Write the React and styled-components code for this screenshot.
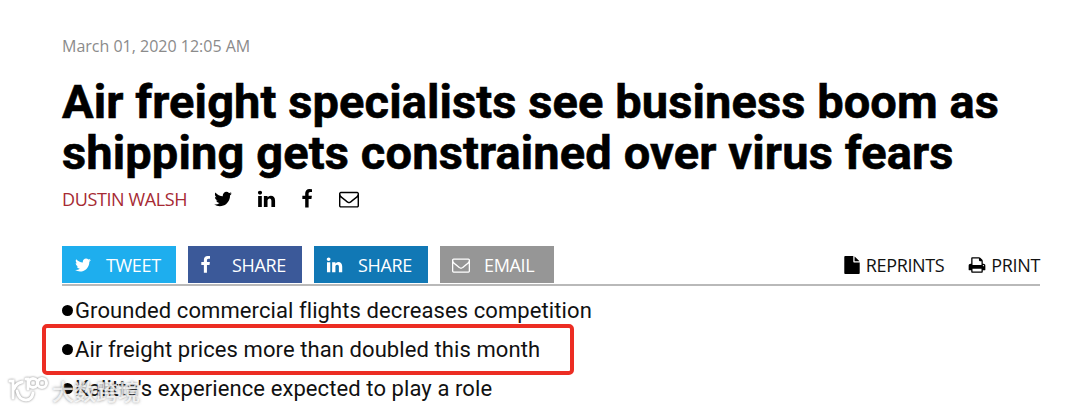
import React from 'react'
import styled, { createGlobalStyle } from 'styled-components'

const icons = {
  twitter: 'M1684 408q-67 98-162 167 1 14 1 42 0 130-38 259.5t-115.500 248.500-184.500 210.500-258 146-323 54.500q-271 0-496-145 35 4 78 4 225 0 401-138-105-2-188-64.500t-114-159.500q33 5 61 5 43 0 85-11-112-23-185.500-111.500t-73.500-205.500v-4q68 38 146 41-66-44-105-115t-39-154q0-88 44-163 121 149 294.500 238.500t371.500 99.500q-8-38-8-74 0-134 94.500-228.500t228.500-94.500q140 0 236 102 109-21 205-78-37 115-142 178 93-10 186-50z',
  linkedin: 'M477 625v991h-330v-991h330zm21-306q1 73-50.500 122t-135.500 49h-2q-82 0-132-49t-50-122q0-74 51.500-122.500t134.500-48.500 133 48.500 51 122.500zm1166 729v568h-329v-530q0-105-40.500-164.500t-126.500-59.500q-63 0-105.500 34.500t-63.500 85.500q-11 30-11 81v553h-329q2-399 2-647t-1-296l-1-48h329v144h-2q20-32 41-56t56.500-52 87-43.500 114.500-15.500q171 0 275 113.500t104 332.500z',
  facebook: 'M1343 12v264h-157q-86 0-116 36t-30 108v189h293l-39 296h-254v759h-306v-759h-255v-296h255v-218q0-186 104-288.500t277-102.500q147 0 228 12z',
  envelope: 'M1664 1504v-768q-32 36-69 66-268 206-426 338-51 43-83 67t-86.500 48.500-102.500 24.500h-2q-48 0-102.500-24.500t-86.500-48.500-83-67q-158-132-426-338-37-30-69-66v768q0 13 9.500 22.500t22.500 9.500h1472q13 0 22.500-9.500t9.500-22.500zm0-1051v-24.500l-.5-13-3-12.500-5.500-9-9-7.500-14-2.500h-1472q-13 0-22.500 9.500t-9.500 22.500q0 168 147 284 193 152 401 317 6 5 35 29.500t46 37.500 44.500 31.500 50.500 27.500 43 9h2q20 0 43-9t50.500-27.500 44.500-31.500 46-37.500 35-29.500q208-165 401-317 54-43 100.500-115.500t46.500-131.500zm128-37v1088q0 66-47 113t-113 47h-1472q-66 0-113-47t-47-113v-1088q0-66 47-113t113-47h1472q66 0 113 47t47 113z',
  print: 'M448 1536h896v-256h-896v256zm0-640h896v-384h-160q-40 0-68-28t-28-68v-160h-640v640zm1152 64q0-26-19-45t-45-19-45 19-19 45 19 45 45 19 45-19 19-45zm128 0v416q0 13-9.500 22.500t-22.500 9.500h-224v160q0 40-28 68t-68 28h-960q-40 0-68-28t-28-68v-160h-224q-13 0-22.500-9.500t-9.500-22.500v-416q0-79 56.500-135.500t135.500-56.500h64v-544q0-40 28-68t68-28h672q40 0 88 20t76 48l152 152q28 28 48 76t20 88v256h64q79 0 135.500 56.500t56.500 135.500z',
  file: 'M1152 512v-472q22 14 36 28l408 408q14 14 28 36h-472zm-128 32q0 40 28 68t68 28h544v1056q0 40-28 68t-68 28h-1344q-40 0-68-28t-28-68v-1600q0-40 28-68t68-28h800v544z',
}

const Icon = ({ name, size, shift }) => (
  <Glyph viewBox='0 0 1792 1792' $size={size} $shift={shift}>
    <path d={icons[name]} />
  </Glyph>
)

const shares = [
  { icon: 'twitter', label: 'TWEET', color: '#1eaeee', shift: 0 },
  { icon: 'facebook', label: 'SHARE', color: '#3b5999', shift: -3.5 },
  { icon: 'linkedin', label: 'SHARE', color: '#1178b5', shift: -0.5 },
  { icon: 'envelope', label: 'EMAIL', color: '#969696', shift: 0 },
]

const App = () => (
  <Page>
    <GlobalStyle />
    <PublishDate>March 01, 2020 12:05 AM</PublishDate>
    <Title>
      <Line $spacing='0.1px'>Air freight specialists see business boom as</Line>
      <Line $spacing='0.13px'>shipping gets constrained over virus fears</Line>
    </Title>
    <Byline>
      <Author>DUSTIN WALSH</Author>
      <Social>
        <Icon name='twitter' size={20} />
        <Icon name='linkedin' size={20} shift={1.5} />
        <Icon name='facebook' size={20} />
        <Icon name='envelope' size={20} />
      </Social>
    </Byline>
    <Toolbar>
      <Shares>
        {shares.map(({ icon, label, color, shift }) => (
          <ShareButton key={icon} $color={color}>
            <Icon name={icon} size={18} shift={shift} />
            <ShareLabel>{label}</ShareLabel>
          </ShareButton>
        ))}
      </Shares>
      <Tools>
        <Tool><Icon name='file' size={18} /><span>REPRINTS</span></Tool>
        <Tool><Icon name='print' size={18} /><span>PRINT</span></Tool>
      </Tools>
    </Toolbar>
    <Points>
      <Point><Dot /><span>Grounded commercial flights decreases competition</span></Point>
      <Point><Dot /><span>Air freight prices more than doubled this month</span><Highlight /></Point>
      <Point><Dot /><span>Kalitta's experience expected to play a role</span></Point>
    </Points>
    <Watermark>
      <WatermarkLogo viewBox='0 0 40 32'>
        <path d='M2 7h3v17M14 8q-6 1-8 7M9 17q2 9 9 9 6 0 7-7' />
        <path d='M18 5h2v10' />
        <circle cx='25' cy='9' r='4.500' />
        <circle cx='34' cy='9' r='4.500' />
      </WatermarkLogo>
      <span>大数跨境</span>
    </Watermark>
  </Page>
)

const GlobalStyle = createGlobalStyle`
  body {
    margin: 0;
    background: #fff;
  }
`
const Page = styled.div`
  box-sizing: border-box;
  position: relative;
  width: 1080px;
  height: 411px;
  padding: 34px 40px 0 62px;
  overflow: hidden;
  font-family: 'Open Sans', sans-serif;
  color: #000;
`
const Glyph = styled.svg`
  flex: none;
  display: block;
  width: ${props => props.$size}px;
  height: ${props => props.$size}px;
  fill: currentColor;
  overflow: visible;
  transform: translateX(${props => props.$shift || 0}px);
`
const PublishDate = styled.div`
  height: 42px;
  line-height: 24px;
  font-size: 16px;
  color: #8b8b8b;
`
const Title = styled.h1`
  margin: 0;
  font-family: Roboto, sans-serif;
  font-size: 47px;
  font-weight: bold;
  line-height: 51px;
  white-space: nowrap;
  -webkit-text-stroke: 0.6px #000;
`
const Line = styled.span`
  display: block;
  letter-spacing: ${props => props.$spacing};
`
const Byline = styled.div`
  display: flex;
  align-items: center;
  height: 42px;
`
const Author = styled.span`
  width: 151px;
  font-size: 18px;
  letter-spacing: -0.39px;
  color: #a62a33;
`
const Social = styled.div`
  display: flex;
  gap: 22px;
`
const Toolbar = styled.div`
  box-sizing: border-box;
  display: flex;
  justify-content: space-between;
  height: 40px;
  margin-top: 26px;
  border-bottom: 2px solid #b9b9b9;
`
const Shares = styled.div`
  display: flex;
  gap: 12px;
`
const ShareButton = styled.div`
  box-sizing: border-box;
  display: flex;
  align-items: center;
  width: 114px;
  height: 37px;
  padding-left: 12px;
  background: ${props => props.$color};
  color: #fff;
`
const ShareLabel = styled.span`
  margin-left: 14px;
  font-size: 18px;
  letter-spacing: -0.35px;
`
const Tools = styled.div`
  display: flex;
  gap: 24px;
  font-size: 18px;
  letter-spacing: -0.36px;
`
const Tool = styled.div`
  display: flex;
  align-items: center;
  gap: 5px;
  color: #111;

  svg {
    color: #000;
  }
`
const Points = styled.div`
  padding-top: 5px;
  font-family: Roboto, sans-serif;
  font-size: 22px;
  letter-spacing: 0.09px;
  color: #111;
`
const Point = styled.div`
  position: relative;
  display: flex;
  align-items: center;
  height: 39px;
  white-space: nowrap;
`
const Dot = styled.i`
  width: 11px;
  height: 11px;
  margin-right: 2px;
  border-radius: 50%;
  background: #000;
`
const Highlight = styled.div`
  box-sizing: border-box;
  position: absolute;
  left: -20px;
  top: -6px;
  width: 532px;
  height: 51px;
  border: 4px solid #ec2d23;
  border-radius: 5px;
`
const Watermark = styled.div`
  position: absolute;
  left: 8px;
  top: 374px;
  display: flex;
  align-items: center;
  height: 32px;
  gap: 4px;
  font-family: 'Noto Sans CJK SC', sans-serif;
  font-size: 22px;
  font-weight: 500;
  line-height: 30px;
  color: rgba(255, 255, 255, 0.8);
  text-shadow: 0 0 3px rgba(90, 90, 90, 0.7);
`
const WatermarkLogo = styled.svg`
  width: 40px;
  height: 32px;
  fill: none;
  stroke: #fff;
  stroke-width: 3;
  stroke-linecap: round;
  filter: drop-shadow(0 0 1.2px rgba(80, 80, 80, 0.7));
`

export default App
